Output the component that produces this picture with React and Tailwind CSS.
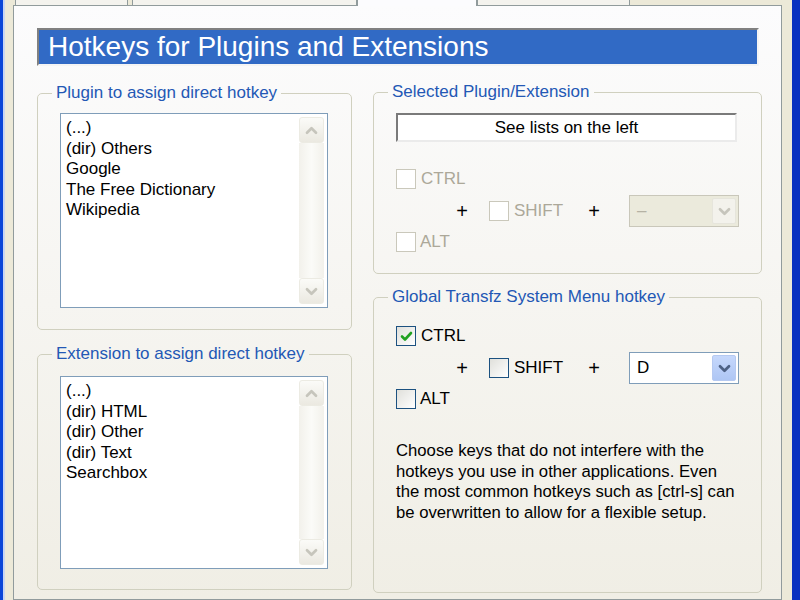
import React from "react";

const Chevron = ({ up, color, className }) => (
  <svg viewBox="0 0 10 10" className={className}>
    <polyline
      points={up ? "2,6.5 5,3.5 8,6.5" : "2,3.5 5,6.5 8,3.5"}
      fill="none"
      stroke={color}
      strokeWidth="1.8"
      strokeLinecap="round"
      strokeLinejoin="round"
    />
  </svg>
);

function ScrollBar() {
  return (
    <div className="w-[25px] flex flex-col">
      <div className="h-[26px] rounded-[3px] border border-[#ecebe3] bg-gradient-to-b from-[#fbfbf8] to-[#ebe9e1] flex items-center justify-center">
        <Chevron up color="#c6c5bc" className="w-[15px] h-[15px]" />
      </div>
      <div className="flex-1 bg-gradient-to-r from-[#f2f1eb] via-[#fbfbf8] to-[#f2f1eb]" />
      <div className="h-[26px] rounded-[3px] border border-[#ecebe3] bg-gradient-to-b from-[#fbfbf8] to-[#ebe9e1] flex items-center justify-center">
        <Chevron color="#c6c5bc" className="w-[15px] h-[15px]" />
      </div>
    </div>
  );
}

function ListBox({ items, height }) {
  return (
    <div
      className="ml-[22px] w-[268px] border border-[#7f9db9] bg-white p-[3px] flex"
      style={{ height }}
    >
      <div className="flex-1 pl-[2px] pt-[1px] text-[17px] leading-[20.5px] text-black">
        {items.map((it) => (
          <div key={it}>{it}</div>
        ))}
      </div>
      <ScrollBar />
    </div>
  );
}

function Group({ title, className, children }) {
  return (
    <fieldset className={"border border-[#d0d0bf] rounded-[5px] " + className}>
      <legend className="ml-[14px] px-[4px] text-[17px] leading-[20px] text-[#2358b5]">
        {title}
      </legend>
      {children}
    </fieldset>
  );
}

function Check({ checked, disabled }) {
  if (disabled) {
    return <div className="w-[20px] h-[20px] border border-[#cac8bb] bg-white" />;
  }
  return (
    <div className="w-[20px] h-[20px] border border-[#1c5180] bg-gradient-to-br from-[#e0e0db] to-white flex items-center justify-center">
      {checked && (
        <svg viewBox="0 0 17 17" className="w-[17px] h-[17px]">
          <path
            d="M4 8.5 L7 11.5 L13 5"
            fill="none"
            stroke="#21a121"
            strokeWidth="2.6"
            strokeLinecap="round"
            strokeLinejoin="round"
          />
        </svg>
      )}
    </div>
  );
}

function Combo({ value, disabled }) {
  return (
    <div
      className={
        "ml-[29px] w-[110px] h-[32px] border flex items-center p-[2px] " +
        (disabled ? "border-[#c9c7ba] bg-[#ebeadc]" : "border-[#7f9db9] bg-white")
      }
    >
      <span
        className={
          "flex-1 pl-[5px] text-[17px] " + (disabled ? "text-[#b5b2a4]" : "text-black")
        }
      >
        {value}
      </span>
      <div
        className={
          "w-[24px] h-full rounded-[2px] flex items-center justify-center " +
          (disabled
            ? "bg-[#f3f2ec] border border-[#e6e5dc]"
            : "bg-gradient-to-b from-[#c6d8fc] to-[#aec6f4] border border-[#b5c9f1]")
        }
      >
        <Chevron color={disabled ? "#c6c5bc" : "#4d6185"} className="w-[15px] h-[15px]" />
      </div>
    </div>
  );
}

function HotkeyRows({ disabled, ctrl, keyValue }) {
  const label = disabled ? "text-[#aca899]" : "text-black";
  return (
    <div className="text-[17px]">
      <div className="h-[32px] flex items-center pl-[22px]">
        <Check disabled={disabled} checked={ctrl} />
        <span className={"ml-[5px] " + label}>CTRL</span>
      </div>
      <div className="h-[32px] flex items-center pl-[82px]">
        <span className="w-[12px] text-center text-[20px] text-black">+</span>
        <div className="ml-[21px]">
          <Check disabled={disabled} />
        </div>
        <span className={"ml-[5px] w-[49px] " + label}>SHIFT</span>
        <span className="ml-[25px] w-[12px] text-center text-[20px] text-black">+</span>
        <Combo value={keyValue} disabled={disabled} />
      </div>
      <div className="h-[30px] flex items-center pl-[22px]">
        <Check disabled={disabled} />
        <span className={"ml-[4px] " + label}>ALT</span>
      </div>
    </div>
  );
}

export default function App() {
  return (
    <div className="w-[800px] h-[600px] overflow-hidden flex bg-[#ece9d8] font-['Liberation_Sans',Arial,sans-serif]">
      <div className="w-[3px] bg-[#0a46d8]" />
      <div className="w-[2px] bg-[#c9d6f2]" />
      <div className="w-[8px]" />
      <div className="w-[769px] flex flex-col">
        <div className="h-[5px] flex items-end">
          <div className="ml-[2px] w-[113px] h-full border-x border-[#919b9c] bg-[#f4f3ee]" />
          <div className="ml-[4px] w-[225px] h-full border-x border-[#919b9c] bg-[#f4f3ee]" />
          <div className="w-[120px] h-[6px] -mb-px relative z-10 border-x border-[#919b9c] bg-[#fcfcfe]" />
          <div className="w-[153px] h-full border-x border-[#919b9c] bg-[#f4f3ee]" />
        </div>
        <div className="flex-1 border border-[#919b9c] bg-gradient-to-b from-[#fcfcfd] to-[#f0eee5] pt-[22px]">
          <div className="ml-[23px] w-[722px] h-[38px] bg-[#316ac5] border-2 border-t-[#808080] border-l-[#808080] border-b-[#f4f4f4] border-r-[#f4f4f4] flex items-center pl-[9px]">
            <span className="text-white text-[28px] leading-none">
              Hotkeys for Plugins and Extensions
            </span>
          </div>
          <div className="ml-[23px] mt-[16px] grid grid-cols-[315px_389px] gap-x-[21px]">
            <div className="pt-[1px] flex flex-col gap-[14px]">
              <Group title="Plugin to assign direct hotkey" className="h-[247px]">
                <div className="mt-[10px]">
                  <ListBox
                    height={195}
                    items={["(...)", "(dir) Others", "Google", "The Free Dictionary", "Wikipedia"]}
                  />
                </div>
              </Group>
              <Group title="Extension to assign direct hotkey" className="h-[246px]">
                <div className="mt-[12px]">
                  <ListBox
                    height={193}
                    items={["(...)", "(dir) HTML", "(dir) Other", "(dir) Text", "Searchbox"]}
                  />
                </div>
              </Group>
            </div>
            <div className="flex flex-col gap-[13px]">
              <Group title="Selected Plugin/Extension" className="h-[192px]">
                <div className="mt-[11px] ml-[22px] w-[341px] h-[29px] bg-white border-2 border-t-[#7a7a7a] border-l-[#7a7a7a] border-b-[#ebebeb] border-r-[#ebebeb] flex items-center justify-center text-[17px] text-black">
                  See lists on the left
                </div>
                <div className="mt-[21px]">
                  <HotkeyRows disabled keyValue="–" />
                </div>
              </Group>
              <Group title="Global Transfz System Menu hotkey" className="h-[306px]">
                <div className="mt-[13px]">
                  <HotkeyRows ctrl keyValue="D" />
                </div>
                <p className="mt-[27px] ml-[22px] whitespace-nowrap text-[16.7px] leading-[20.5px] text-black">
                  Choose keys that do not interfere with the
                  <br />
                  hotkeys you use in other applications. Even
                  <br />
                  the most common hotkeys such as [ctrl-s] can
                  <br />
                  be overwritten to allow for a flexible setup.
                </p>
              </Group>
            </div>
          </div>
        </div>
      </div>
      <div className="w-[10px]" />
      <div className="w-[8px] bg-[#0831c0]" />
    </div>
  );
}
